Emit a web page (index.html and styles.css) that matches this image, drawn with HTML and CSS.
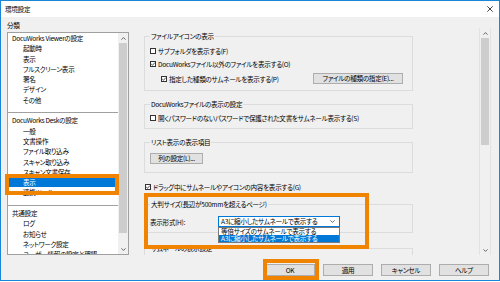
FILE: index.html
```html
<!DOCTYPE html>
<html lang="ja">
  <head>
    <meta charset="UTF-8" />
    <meta name="viewport" content="width=device-width, initial-scale=1.0" />
    <title>環境設定</title>
    <link rel="stylesheet" href="styles.css">
  </head>
  <body>
    <div class="window">
      <div class="titlebar">
        <span class="title">環境設定</span>
        <svg class="close" width="6" height="6" viewBox="0 0 6 6">
          <path d="M0.3 0.3 L5.7 5.7 M5.7 0.3 L0.3 5.7" stroke="#111" stroke-width="0.8" fill="none" />
        </svg>
      </div>

      <div class="main">
        <div class="side">
          <div class="side-label">分類</div>
          <div class="tree">
            <div class="tree-items">
              <div class="row head">DocuWorks Viewerの設定</div>
              <div class="row">起動時</div>
              <div class="row">表示</div>
              <div class="row">フルスクリーン表示</div>
              <div class="row">署名</div>
              <div class="row">デザイン</div>
              <div class="row">その他</div>
              <div class="row sep"></div>
              <div class="row head">DocuWorks Deskの設定</div>
              <div class="row">一般</div>
              <div class="row">文書操作</div>
              <div class="row">ファイル取り込み</div>
              <div class="row">スキャン取り込み</div>
              <div class="row">スキャン文書保存</div>
              <div class="row is-selected">表示</div>
              <div class="row">連携ツール</div>
              <div class="row sep"></div>
              <div class="row head">共通設定</div>
              <div class="row">ログ</div>
              <div class="row">お知らせ</div>
              <div class="row">ネットワーク設定</div>
              <div class="row">ユーザー情報の設定と確認</div>
            </div>
            <div class="vscroll">
              <svg class="arrow" width="5" height="3" viewBox="0 0 5 3"><path d="M0.5 2.6 L2.5 0.6 L4.5 2.6" stroke="#555" stroke-width="0.9" fill="none" /></svg>
              <div class="thumb tree-thumb"></div>
              <svg class="arrow" width="5" height="3" viewBox="0 0 5 3"><path d="M0.5 0.4 L2.5 2.4 L4.5 0.4" stroke="#555" stroke-width="0.9" fill="none" /></svg>
            </div>
          </div>
        </div>

        <div class="panel">
          <div class="panel-body">
            <fieldset class="group group-icons">
              <legend>ファイルアイコンの表示</legend>
              <div class="check">
                <span class="box"></span>サブフォルダを表示する(F)
              </div>
              <div class="check">
                <span class="box"><svg width="4" height="4" viewBox="0 0 4 4"><path d="M0.2 2 L1.5 3.3 L3.8 0.6" stroke="#222" stroke-width="0.8" fill="none" /></svg></span>DocuWorksファイル以外のファイルを表示する(O)
              </div>
              <div class="check sub">
                <span class="box"><svg width="4" height="4" viewBox="0 0 4 4"><path d="M0.2 2 L1.5 3.3 L3.8 0.6" stroke="#222" stroke-width="0.8" fill="none" /></svg></span>指定した種類のサムネールを表示する(P)
                <button class="btn btn-types">ファイルの種類の指定(E)...</button>
              </div>
            </fieldset>

            <fieldset class="group group-docs">
              <legend>DocuWorksファイルの表示の設定</legend>
              <div class="check">
                <span class="box"></span>開くパスワードのないパスワードで保護された文書をサムネール表示する(S)
              </div>
            </fieldset>

            <fieldset class="group group-list">
              <legend>リスト表示の表示項目</legend>
              <div class="btn-row">
                <button class="btn btn-cols">列の設定(L)...</button>
              </div>
            </fieldset>

            <div class="check drag">
              <span class="box"><svg width="4" height="4" viewBox="0 0 4 4"><path d="M0.2 2 L1.5 3.3 L3.8 0.6" stroke="#222" stroke-width="0.8" fill="none" /></svg></span>ドラッグ中にサムネールやアイコンの内容を表示する(G)
            </div>

            <fieldset class="group group-large">
              <legend>大判サイズ(長辺が500mmを超えるページ)</legend>
              <div class="field">
                <span class="field-label">表示形式(H):</span>
                <div class="select">
                  <span>A3に縮小したサムネールで表示する</span>
                  <svg width="5" height="3" viewBox="0 0 5 3"><path d="M0.5 0.4 L2.5 2.4 L4.5 0.4" stroke="#444" stroke-width="0.8" fill="none" /></svg>
                  <div class="dropdown">
                    <div class="option">等倍サイズのサムネールで表示する</div>
                    <div class="option is-selected">A3に縮小したサムネールで表示する</div>
                  </div>
                </div>
              </div>
            </fieldset>

            <fieldset class="group group-thumb">
              <legend>サムネールの表示設定</legend>
              <div class="check">
                <span class="box"></span>サムネールを表示する
              </div>
            </fieldset>
          </div>
          <div class="vscroll big">
            <svg class="arrow" width="5" height="3" viewBox="0 0 5 3"><path d="M0.5 2.6 L2.5 0.6 L4.5 2.6" stroke="#555" stroke-width="0.9" fill="none" /></svg>
            <div class="thumb panel-thumb"></div>
            <svg class="arrow" width="5" height="3" viewBox="0 0 5 3"><path d="M0.5 0.4 L2.5 2.4 L4.5 0.4" stroke="#555" stroke-width="0.9" fill="none" /></svg>
          </div>
        </div>
      </div>

      <div class="footer">
        <button class="btn btn-foot">OK</button>
        <button class="btn btn-foot">適用</button>
        <button class="btn btn-foot">キャンセル</button>
        <button class="btn btn-foot">ヘルプ</button>
      </div>
    </div>

    <!-- marcas naranjas encima -->
    <div class="mark mark-tree"></div>
    <div class="mark mark-large"></div>
    <div class="mark mark-ok"></div>
  </body>
</html>
```

FILE: styles.css
```css
:root {
  --main-font: "Noto Sans CJK JP", "Noto Sans", sans-serif;
  --font-size: 6.6px;
  --spacing: -0.3px;
  --window-color: #1a86d8;
  --face-color: #f0f0f0;
  --line-color: #dcdcdc;
  --button-color: #e1e1e1;
  --button-border: #adadad;
  --select-color: #0078d7;
  --mark-color: #f08300;
}
html {
  box-sizing: border-box;
  font-family: var(--main-font);
  font-size: var(--font-size);
}

*,
*:before,
*:after {
  box-sizing: inherit;
}

body {
  margin: 0;
  position: relative;
  width: 500px;
  height: 282px;
  overflow: hidden;
  background-color: #fff;
}

.window {
  width: 500px;
  height: 281px;
  border: 1px solid var(--window-color);
  background-color: var(--face-color);
  display: flex;
  flex-direction: column;
  color: #000;
  line-height: 10px;
  letter-spacing: var(--spacing);
  font-feature-settings: "palt";
}

.titlebar {
  height: 16px;
  flex-shrink: 0;
  background-color: #fff;
  display: flex;
  align-items: center;
  justify-content: space-between;
  padding: 0 6px 0 4px;
}

.main {
  height: 240px;
  flex-shrink: 0;
  display: flex;
}

/* lista de categorias */
.side {
  width: 128px;
  padding: 3px 0 0 6px;
}

.side-label {
  height: 10px;
  margin-bottom: 2px;
}

.tree {
  height: 223px;
  border: 1px solid #a0a0a0;
  background-color: #fff;
  display: flex;
  overflow: hidden;
}

.tree-items {
  flex: 1;
  overflow: hidden;
}

.row {
  height: 10.3px;
  line-height: 10.3px;
  padding-left: 15px;
  white-space: nowrap;
}

.row.head {
  padding-left: 4px;
}

.row.sep {
  padding: 7px 0 0;
}

.row.sep::after {
  content: "";
  display: block;
  border-top: 1px solid #a0a0a0;
}

.row.is-selected {
  background-color: var(--select-color);
  color: #fff;
}

.vscroll {
  width: 10px;
  background-color: var(--face-color);
  display: flex;
  flex-direction: column;
  align-items: center;
}

.vscroll .arrow {
  margin: 4px 0 3px;
  flex-shrink: 0;
}

.thumb {
  width: 8px;
  background-color: #cdcdcd;
}

.tree-thumb {
  height: 190px;
  margin-bottom: auto;
}

/* panel derecho */
.panel {
  width: 351px;
  height: 227px;
  margin: 11px 0 0 11px;
  display: flex;
}

.panel-body {
  flex: 1;
  overflow: hidden;
  padding: 3px 0 0 4px;
}

.group {
  width: 269px;
  margin: 0;
  border: 1px solid var(--line-color);
  padding: 0 9px 0 5px;
  min-width: 0;
}

.group legend {
  padding: 0 1px;
  line-height: 10px;
  height: 10px;
}

.group-icons {
  padding-top: 3px;
  padding-bottom: 5px;
}

.group-docs {
  margin-top: 8px;
  padding-top: 2px;
  padding-bottom: 4px;
}

.group-list {
  margin-top: 8px;
  padding-top: 5px;
  padding-bottom: 8px;
}

.group-large {
  margin-top: 6px;
  padding-top: 6px;
  padding-bottom: 4px;
}

.group-thumb {
  margin-top: 10px;
  padding-top: 4px;
  padding-bottom: 4px;
}

.check {
  height: 13px;
  display: flex;
  align-items: center;
  white-space: nowrap;
}

.check.sub {
  margin-top: 2px;
  padding-left: 11px;
}

.check.drag {
  height: 12px;
  margin-top: 8px;
  padding-left: 1px;
}

.box {
  width: 6px;
  height: 6px;
  flex-shrink: 0;
  margin-right: 2px;
  border: 1px solid #333;
  background-color: #fff;
  display: flex;
  align-items: center;
  justify-content: center;
}

.btn {
  height: 11px;
  padding: 0;
  border: 1px solid var(--button-border);
  background-color: var(--button-color);
  font-family: var(--main-font);
  font-size: var(--font-size);
  font-feature-settings: "palt";
  letter-spacing: var(--spacing);
  line-height: 9px;
  color: #000;
}

.btn-types {
  width: 90px;
  margin-left: auto;
}

.btn-row {
  height: 12px;
  display: flex;
  align-items: center;
}

.btn-cols {
  width: 53px;
}

.field {
  height: 13px;
  display: flex;
  align-items: center;
}

.field-label {
  width: 68px;
}

.select {
  position: relative;
  width: 122px;
  height: 11px;
  border: 1px solid var(--select-color);
  background-color: #fff;
  display: flex;
  align-items: center;
  justify-content: space-between;
  padding: 0 4px 0 2px;
  line-height: 9px;
  white-space: nowrap;
}

.dropdown {
  position: absolute;
  top: calc(100% + 1px);
  left: -1px;
  width: 122px;
  border: 1px solid #7a7a7a;
  background-color: #fff;
}

.option {
  height: 7px;
  line-height: 7px;
  padding-left: 2px;
  white-space: nowrap;
  overflow: hidden;
}

.option.is-selected {
  background-color: var(--select-color);
  color: #fff;
}

.vscroll.big {
  width: 12px;
  border-left: 1px solid #e2e2e2;
  border-right: 1px solid #e2e2e2;
}

.vscroll.big .arrow {
  margin: 4px 0 3px;
}

.panel-thumb {
  height: 107px;
  margin-bottom: auto;
}

.footer {
  flex: 1;
  display: flex;
  justify-content: flex-end;
  align-items: flex-start;
  gap: 8px;
  padding: 7px 10px 0 0;
}

.btn-foot {
  width: 50px;
  height: 12px;
  line-height: 10px;
}

/* marcas */
.mark {
  position: absolute;
  border: 4px solid var(--mark-color);
}

.mark-tree {
  left: 5px;
  top: 174px;
  width: 114px;
  height: 21px;
}

.mark-large {
  left: 144px;
  top: 193px;
  width: 225px;
  height: 56px;
}

.mark-ok {
  left: 263px;
  top: 259px;
  width: 56px;
  height: 21px;
}
```
